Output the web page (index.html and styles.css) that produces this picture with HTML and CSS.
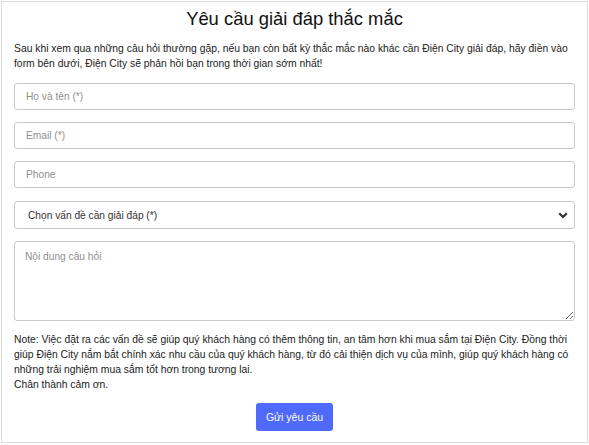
FILE: index.html
```html
<!DOCTYPE html>
<html lang="vi">
<head>
<meta charset="utf-8">
<title>Yêu cầu giải đáp thắc mắc</title>
<link rel="stylesheet" href="styles.css">
</head>
<body>
<div class="box">
  <h1 class="title">Yêu cầu giải đáp thắc mắc</h1>
  <p class="intro">Sau khi xem qua những câu hỏi thường gặp, nếu bạn còn bất kỳ thắc mắc nào khác cần Điện City giải đáp, hãy điền vào form bên dưới, Điện City sẽ phản hồi bạn trong thời gian sớm nhất!</p>
  <form class="form">
    <input class="field" type="text" placeholder="Họ và tên (*)">
    <input class="field" type="text" placeholder="Email (*)">
    <input class="field" type="text" placeholder="Phone">
    <select class="field select">
      <option>Chọn vấn đề cần giải đáp (*)</option>
    </select>
    <textarea class="field area" placeholder="Nội dung câu hỏi"></textarea>
  </form>
  <p class="note">Note: Việc đặt ra các vấn đề sẽ giúp quý khách hàng có thêm thông tin, an tâm hơn khi mua sắm tại Điện City. Đồng thời giúp Điện City nắm bắt chính xác nhu cầu của quý khách hàng, từ đó cải thiện dịch vụ của mình, giúp quý khách hàng có những trải nghiệm mua sắm tốt hơn trong tương lai.<br>Chân thành cảm ơn.</p>
  <div class="actions">
    <button class="btn" type="button">Gửi yêu cầu</button>
  </div>
</div>
</body>
</html>
```
FILE: styles.css
```css
* { box-sizing: border-box; }
html, body {
  margin: 0;
  padding: 0;
  background: #fff;
}
body {
  font-family: "Liberation Sans", Arial, sans-serif;
  color: #222;
  font-size: 10.35px;
}
.box {
  margin: 1px;
  width: 587px;
  height: 442px;
  border: 1px solid #dcdcdc;
  padding: 5px 12px 10px 12px;
}
.title {
  margin: 0;
  font-size: 18.4px;
  line-height: 24px;
  font-weight: normal;
  text-align: center;
  color: #111;
}
.intro {
  margin: 10px 0 12px 0;
  line-height: 15px;
  font-size: 10.35px;
}
.form {
  display: flex;
  flex-direction: column;
  gap: 12px;
}
.field {
  display: block;
  width: 100%;
  height: 27px;
  margin: 0;
  border: 1px solid #c9c9c9;
  border-radius: 3px;
  padding: 0 11px;
  font-family: "Liberation Sans", Arial, sans-serif;
  font-size: 10.2px;
  color: #333;
  background: #fff;
  outline: none;
}
.field::placeholder { color: #8f8f8f; }
.select {
  -webkit-appearance: none;
  appearance: none;
  height: 28px;
  margin-top: 1px;
  padding-left: 13px;
  color: #333;
  background-image: url("data:image/svg+xml;utf8,<svg xmlns='http://www.w3.org/2000/svg' width='10' height='7' viewBox='0 0 10 7'><path d='M1.2 1.2 L5 5 L8.8 1.2' fill='none' stroke='%23333' stroke-width='2.2'/></svg>");
  background-repeat: no-repeat;
  background-position: right 6px center;
  background-size: 10px 7px;
}
.area {
  height: 80px;
  padding: 8px 10px;
  resize: vertical;
  line-height: 14px;
}
.note {
  margin: 11px 0 11px 0;
  line-height: 15px;
  font-size: 10.35px;
}
.actions {
  display: flex;
  justify-content: center;
}
.btn {
  width: 77px;
  height: 28px;
  border: none;
  border-radius: 3px;
  background: #4e69fb;
  color: #fff;
  font-family: "Liberation Sans", Arial, sans-serif;
  font-size: 10.5px;
  padding: 0;
}
```
